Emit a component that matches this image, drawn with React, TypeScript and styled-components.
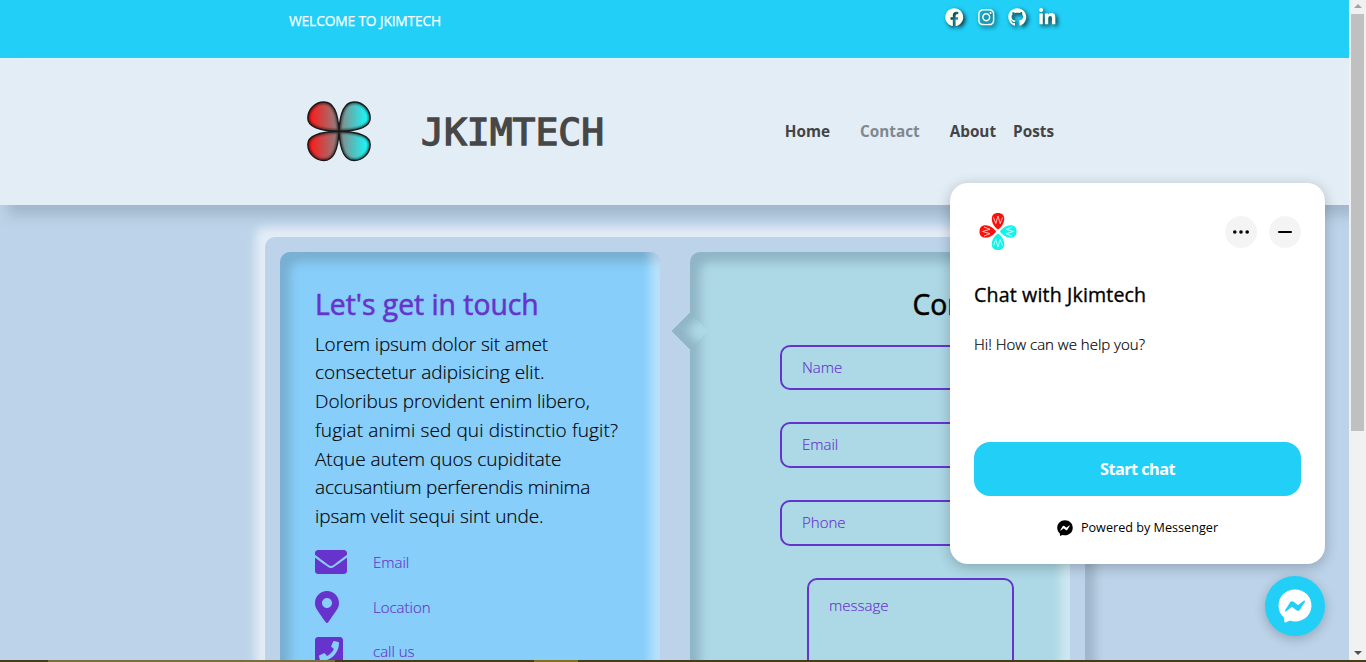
import React from "react";
import styled, { createGlobalStyle, css } from "styled-components";
import { FaFacebook, FaInstagram, FaGithub, FaLinkedinIn, FaEnvelope, FaMapMarkerAlt, FaPhoneSquare, FaFacebookMessenger } from "react-icons/fa";

const Global = createGlobalStyle`
  * { box-sizing: border-box; }
  html, body { margin: 0; height: 662px; overflow: hidden; background: #bcd3e9; }
  body { font-family: "Open Sans", "Noto Sans", sans-serif; color: #000; }
  h1, h2, h3, p { margin: 0; }
`;

const Screen = styled.div`
  position: relative;
  width: 1366px;
  height: 662px;
  overflow: hidden;
  display: flex;
  flex-direction: column;
`;
const Viewport = styled.div`
  display: flex;
  height: 660px;
  flex: none;
`;
const Page = styled.div`
  width: 1349px;
  height: 660px;
  overflow: hidden;
  background: #bcd3e9;
`;
const TopBar = styled.div`
  height: 58px;
  padding: 8px 291px 0 289px;
  display: flex;
  justify-content: space-between;
  background: #21cff7;
  color: #fff;
`;
const Welcome = styled.span`
  font-size: 13.8px;
  line-height: 26px;
  letter-spacing: -0.16px;
  -webkit-text-stroke: 0.25px #fff;
  white-space: nowrap;
`;
const Socials = styled.div`
  display: flex;
  gap: 13px;
  color: #fffff0;
  svg { width: 18.5px; height: 18.5px; overflow: visible; filter: drop-shadow(2px 2px 2px rgba(0, 0, 0, 0.8)); }
  svg:last-child { margin: 0 2px 0 -2px; }
`;
const Header = styled.header`
  position: relative;
  height: 147px;
  padding: 0 295px 0 289px;
  display: flex;
  align-items: center;
  background: #e3edf6;
  box-shadow: 8px 10px 12px #a1b6ca;
`;
const Brand = styled.h1`
  margin-left: 32px;
  font: normal 38px/50px "DejaVu Sans Mono", monospace;
  color: #474747;
  -webkit-text-stroke: 1.4px #474747;
`;
const Nav = styled.nav`
  margin: -1px 0 0 auto;
  display: flex;
`;
const NavLink = styled.a<{ $gap: number; $active?: boolean }>`
  margin-left: ${(p) => p.$gap}px;
  font-size: 15.3px;
  line-height: 24px;
  font-weight: 700;
  color: ${(p) => (p.$active ? "#80878e" : "#444")};
`;
const Card = styled.main`
  margin: 32px 0 0 265px;
  width: 820px;
  height: 700px;
  padding: 15px;
  display: flex;
  gap: 30px;
  border-radius: 10px;
  background: #bcd3e9;
  box-shadow: -10px -10px 10px #e3edf6, 10px 10px 10px #a1b6ca;
`;
const inset = css`
  box-shadow: inset -10px -10px 10px rgba(255, 255, 255, 0.4), inset 10px 10px 10px rgba(100, 130, 150, 0.4);
`;
const Panel = styled.section<{ $bg: string }>`
  position: relative;
  width: 380px;
  border-radius: 10px;
  background: ${(p) => p.$bg};
  ${inset}
`;
const InfoPanel = styled(Panel)`
  padding: 34px 30px 0 35px;
`;
const FormPanel = styled(Panel)`
  padding: 34px 0 0 90px;
`;
const Pointer = styled.i`
  position: absolute;
  left: -13px;
  top: 66px;
  width: 26px;
  height: 26px;
  transform: rotate(-45deg);
  background: #add8e6;
  box-shadow: inset 10px 10px 10px rgba(100, 130, 150, 0.4);
`;
const Title = styled.h2`
  font-size: 28.3px;
  line-height: 36px;
  font-weight: 400;
  color: #6633cc;
  -webkit-text-stroke: 0.55px currentColor;
  white-space: nowrap;
`;
const Blurb = styled.p`
  margin-top: 7.5px;
  font-size: 19px;
  line-height: 28.75px;
  font-weight: 300;
  -webkit-text-stroke: 0.15px currentColor;
  white-space: nowrap;
`;
const Line = styled.span<{ $track: number }>`
  display: block;
  letter-spacing: ${(p) => p.$track}px;
`;
const Contacts = styled.ul`
  margin: 9px 0 0;
  padding: 0;
  list-style: none;
  color: #6633cc;
`;
const Contact = styled.li<{ $icon: number }>`
  height: 44.7px;
  display: flex;
  align-items: center;
  font-size: 15px;
  font-weight: 300;
  -webkit-text-stroke: 0.15px currentColor;
  span { width: 58px; display: flex; }
  svg { height: 32px; width: ${(p) => p.$icon}px; }
`;
const FormTitle = styled(Title)`
  margin-left: 132.5px;
  color: #000;
`;
const Fields = styled.div`
  margin-top: 22.8px;
`;
const Field = styled.div`
  width: 260px;
  height: 45.6px;
  margin-bottom: 32px;
  padding-left: 20px;
  border: 2px solid #6633cc;
  border-radius: 10px;
  font-size: 15px;
  line-height: 41px;
  font-weight: 300;
  -webkit-text-stroke: 0.15px currentColor;
  color: #6633cc;
`;
const Message = styled(Field)`
  width: 207px;
  height: 120px;
  margin-left: 27px;
  line-height: 50px;
`;
const Scrollbar = styled.div`
  width: 17px;
  height: 660px;
  padding: 4px 0 5px 2px;
  display: flex;
  flex-direction: column;
  background: #f1f1f1;
`;
const Thumb = styled.div`
  width: 13px;
  height: 417px;
  margin: 6px 0 auto;
  background: #c0c0c0;
`;
const Arrow = styled.i<{ $down?: boolean }>`
  margin-left: 3px;
  width: 0;
  border: 4px solid transparent;
  ${(p) => (p.$down ? "border-top-color:#505050;border-bottom:0;" : "border-bottom-color:#a3a3a3;border-top:0;")}
`;
const Taskbar = styled.div`
  height: 2px;
  display: flex;
  background: #453d18;
`;
const TaskItem = styled.i<{ $x: number; $w: number; $c: string }>`
  margin-left: ${(p) => p.$x}px;
  width: ${(p) => p.$w}px;
  background: ${(p) => p.$c};
`;
const Chat = styled.aside`
  position: absolute;
  left: 950px;
  top: 183px;
  width: 375px;
  height: 381px;
  padding: 24px;
  border-radius: 18px;
  background: #fff;
  box-shadow: 0 3px 14px rgba(0, 0, 0, 0.24);
`;
const ChatHead = styled.div`
  display: flex;
  align-items: center;
  gap: 12px;
  height: 50px;
  > svg { margin-right: auto; }
`;
const Round = styled.button`
  width: 32px;
  height: 32px;
  padding: 0;
  border: 0;
  border-radius: 50%;
  background: #f4f4f4;
`;
const ChatTitle = styled.h3`
  margin-top: 25px;
  font-size: 19.6px;
  line-height: 26px;
  font-weight: 400;
  letter-spacing: 0.15px;
  -webkit-text-stroke: 0.35px #000;
`;
const Greeting = styled.p`
  margin-top: 25px;
  font-size: 15px;
  line-height: 22px;
  font-weight: 300;
  -webkit-text-stroke: 0.2px currentColor;
`;
const Start = styled.button`
  display: block;
  width: 327px;
  height: 54px;
  margin-top: 87px;
  border: 0;
  border-radius: 16px;
  background: #21cff7;
  color: #fff;
  font: 700 16.3px "Open Sans", sans-serif;
  letter-spacing: -0.55px;
`;
const Powered = styled.div`
  margin-top: 22px;
  display: flex;
  align-items: center;
  justify-content: center;
  gap: 8px;
  font-size: 12.65px;
  line-height: 19px;
  svg { position: relative; top: 0.5px; }
`;
const Bubble = styled.button`
  position: absolute;
  left: 1265px;
  top: 576px;
  width: 60px;
  height: 60px;
  padding: 0;
  display: flex;
  align-items: center;
  justify-content: center;
  border: 0;
  border-radius: 50%;
  background: #21cff7;
  color: #fff;
  box-shadow: 0 3px 12px rgba(0, 0, 0, 0.22);
`;

const leaves =
  "M50 50C49.500 39 47 20 34.500 20C25 20 18 28 18 36.500C18 46 32 49.500 50 50ZM50 50C50.500 39 53 20 65.500 20C75 20 82 28 82 36.500C82 46 68 49.500 50 50ZM50 50C49.500 61 47 80 34.500 80C25 80 18 72 18 63.500C18 54 32 50.500 50 50ZM50 50C50.500 61 53 80 65.500 80C75 80 82 72 82 63.500C82 54 68 50.500 50 50Z";

const Clover = () => (
  <svg width="100" height="100" viewBox="0 0 100 100">
    <defs>
      <linearGradient id="body" gradientUnits="userSpaceOnUse" x1="19" y1="0" x2="81" y2="0">
        <stop offset="0" stopColor="#ff1616" />
        <stop offset="0.5" stopColor="#8d8484" />
        <stop offset="1" stopColor="#12ffff" />
      </linearGradient>
      <filter id="soft" x="-20%" y="-20%" width="140%" height="140%">
        <feGaussianBlur stdDeviation="1" />
      </filter>
      <clipPath id="inside"><path d={leaves} /></clipPath>
    </defs>
    <g transform="translate(50 49.300) scale(0.975 0.975) translate(-50 -50)">
      <path d={leaves} fill="url(#body)" />
      <g clipPath="url(#inside)">
        <path d={leaves} fill="none" stroke="#111" strokeWidth="3.500" opacity="0.65" filter="url(#soft)" />
      </g>
      <path d={leaves} fill="none" stroke="#1a1a1a" strokeWidth="1.400" />
    </g>
  </svg>
);

const petals = [
  { color: "#12f3ea", angle: 90 },
  { color: "#12f3ea", angle: 180 },
  { color: "#f9120c", angle: 270 },
  { color: "#f9120c", angle: 0 },
];

const ChatLogo = () => (
  <svg width="48" height="48" viewBox="0 0 48 48">
    {petals.map(({ color, angle }) => (
      <g key={angle} transform={`rotate(${angle} 24 23.500)`}>
        <path d="M24 21.500C21 19.500 17.800 15.500 17.800 11C17.800 7 20 5 24 5S30.200 7 30.200 11C30.200 15.500 27 19.500 24 21.500Z" fill={color} />
        <path d="M19.500 9.500L21.800 15.500L24 8L26.200 15.500L28.500 9.500" fill="none" stroke="#fff" strokeWidth="0.900" opacity="0.800" />
      </g>
    ))}
  </svg>
);

const blurb = [
  { text: "Lorem ipsum dolor sit amet", track: -0.12 },
  { text: "consectetur adipisicing elit.", track: -0.02 },
  { text: "Doloribus provident enim libero,", track: -0.03 },
  { text: "fugiat animi sed qui distinctio fugit?", track: 0.11 },
  { text: "Atque autem quos cupiditate", track: -0.04 },
  { text: "accusantium perferendis minima", track: -0.17 },
  { text: "ipsam velit sequi sint unde.", track: -0.08 },
];

export default function App() {
  return (
    <Screen>
      <Global />
      <Viewport>
        <Page>
          <TopBar>
            <Welcome>WELCOME TO JKIMTECH</Welcome>
            <Socials><FaFacebook /><FaInstagram /><FaGithub /><FaLinkedinIn /></Socials>
          </TopBar>
          <Header>
            <Clover />
            <Brand>JKIMTECH</Brand>
            <Nav>
              <NavLink $gap={0}>Home</NavLink>
              <NavLink $gap={30} $active>Contact</NavLink>
              <NavLink $gap={30}>About</NavLink>
              <NavLink $gap={17}>Posts</NavLink>
            </Nav>
          </Header>
          <Card>
            <InfoPanel $bg="#87cefa">
              <Title>Let's get in touch</Title>
              <Blurb>
                {blurb.map((l) => <Line key={l.text} $track={l.track}>{l.text}</Line>)}
              </Blurb>
              <Contacts>
                <Contact $icon={32}><span><FaEnvelope /></span>Email</Contact>
                <Contact $icon={24}><span><FaMapMarkerAlt /></span>Location</Contact>
                <Contact $icon={28}><span><FaPhoneSquare /></span>call us</Contact>
              </Contacts>
            </InfoPanel>
            <FormPanel $bg="#add8e6">
              <Pointer />
              <FormTitle>Contact</FormTitle>
              <Fields>
                <Field>Name</Field>
                <Field>Email</Field>
                <Field>Phone</Field>
                <Message>message</Message>
              </Fields>
            </FormPanel>
          </Card>
        </Page>
        <Scrollbar><Arrow /><Thumb /><Arrow $down /></Scrollbar>
      </Viewport>
      <Taskbar>
        <TaskItem $x={48} $w={287} $c="#7a6c3c" />
        <TaskItem $x={199} $w={44} $c="#83711f" />
      </Taskbar>
      <Chat>
        <ChatHead>
          <ChatLogo />
          <Round><svg width="32" height="32"><circle cx="9.800" cy="16" r="1.800" /><circle cx="16" cy="16" r="1.800" /><circle cx="22.200" cy="16" r="1.800" /></svg></Round>
          <Round><svg width="32" height="32"><rect x="9" y="15" width="14" height="2" rx="1" /></svg></Round>
        </ChatHead>
        <ChatTitle>Chat with Jkimtech</ChatTitle>
        <Greeting>Hi! How can we help you?</Greeting>
        <Start>Start chat</Start>
        <Powered><FaFacebookMessenger size={16} />Powered by Messenger</Powered>
      </Chat>
      <Bubble><FaFacebookMessenger size={34} /></Bubble>
    </Screen>
  );
}
